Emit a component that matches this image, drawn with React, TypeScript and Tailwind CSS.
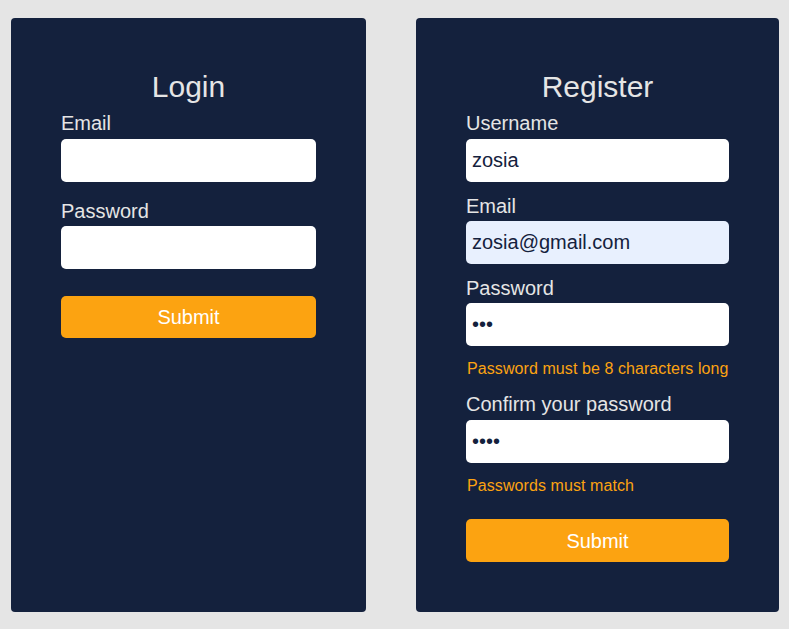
import React from "react";

const font = { fontFamily: '"Liberation Sans", Arial, sans-serif' };

function Label({ children, className = "" }: { children: React.ReactNode; className?: string }) {
  return (
    <label className={`block text-[20px] leading-[24px] mb-[3.5px] text-[#e5e5e5] ${className}`}>{children}</label>
  );
}

function Field({
  value = "",
  type = "text",
  autofill = false,
}: {
  value?: string;
  type?: string;
  autofill?: boolean;
}) {
  return (
    <input
      type={type}
      value={value}
      readOnly
      className={`block w-full h-[43px] rounded-[5px] border-0 outline-none px-[6px] text-[20px] text-[#14213d] ${
        autofill ? "bg-[#e8f0fe]" : "bg-white"
      }`}
      style={font}
    />
  );
}

function Error({ children, className = "" }: { children: React.ReactNode; className?: string }) {
  return (
    <div className={`pl-[1px] text-[16px] leading-[18px] tracking-[0.08px] text-[#fca311] whitespace-nowrap ${className}`}>
      {children}
    </div>
  );
}

function SubmitButton({ className = "", h = "h-[43px]" }: { className?: string; h?: string }) {
  return (
    <button
      className={`block w-full ${h} rounded-[5px] bg-[#fca311] text-white text-[20px] ${className}`}
      style={font}
    >
      Submit
    </button>
  );
}

export default function App() {
  return (
    <div className="min-h-[629px] w-full bg-[#e5e5e5]" style={font}>
      <div className="flex gap-[50px] pt-[18px] pl-[11px]">
        <div className="bg-[#14213d] rounded-[4px] px-[50px] pt-[52px]">
          <div className="w-[255px]">
            <h1 className="text-center text-[30px] leading-[34px] text-[#e5e5e5] mb-[7px]">Login</h1>
            <Label>Email</Label>
            <Field />
            <Label className="mt-[17px]">Password</Label>
            <Field type="password" />
            <SubmitButton className="mt-[27px]" h="h-[42px]" />
          </div>
        </div>
        <div className="bg-[#14213d] rounded-[4px] px-[50px] pt-[52px] pb-[50px]">
          <div className="w-[263px]">
            <h1 className="text-center text-[30px] leading-[34px] text-[#e5e5e5] mb-[7px]">Register</h1>
            <Label>Username</Label>
            <Field value="zosia" />
            <Label className="mt-[12px]">Email</Label>
            <Field value="zosia@gmail.com" autofill />
            <Label className="mt-[11.5px]">Password</Label>
            <Field type="password" value="abc" />
            <Error className="mt-[13.5px]">Password must be 8 characters long</Error>
            <Label className="mt-[14.5px]">Confirm your password</Label>
            <Field type="password" value="abcd" />
            <Error className="mt-[14.5px]">Passwords must match</Error>
            <SubmitButton className="mt-[24px]" />
          </div>
        </div>
      </div>
    </div>
  );
}
